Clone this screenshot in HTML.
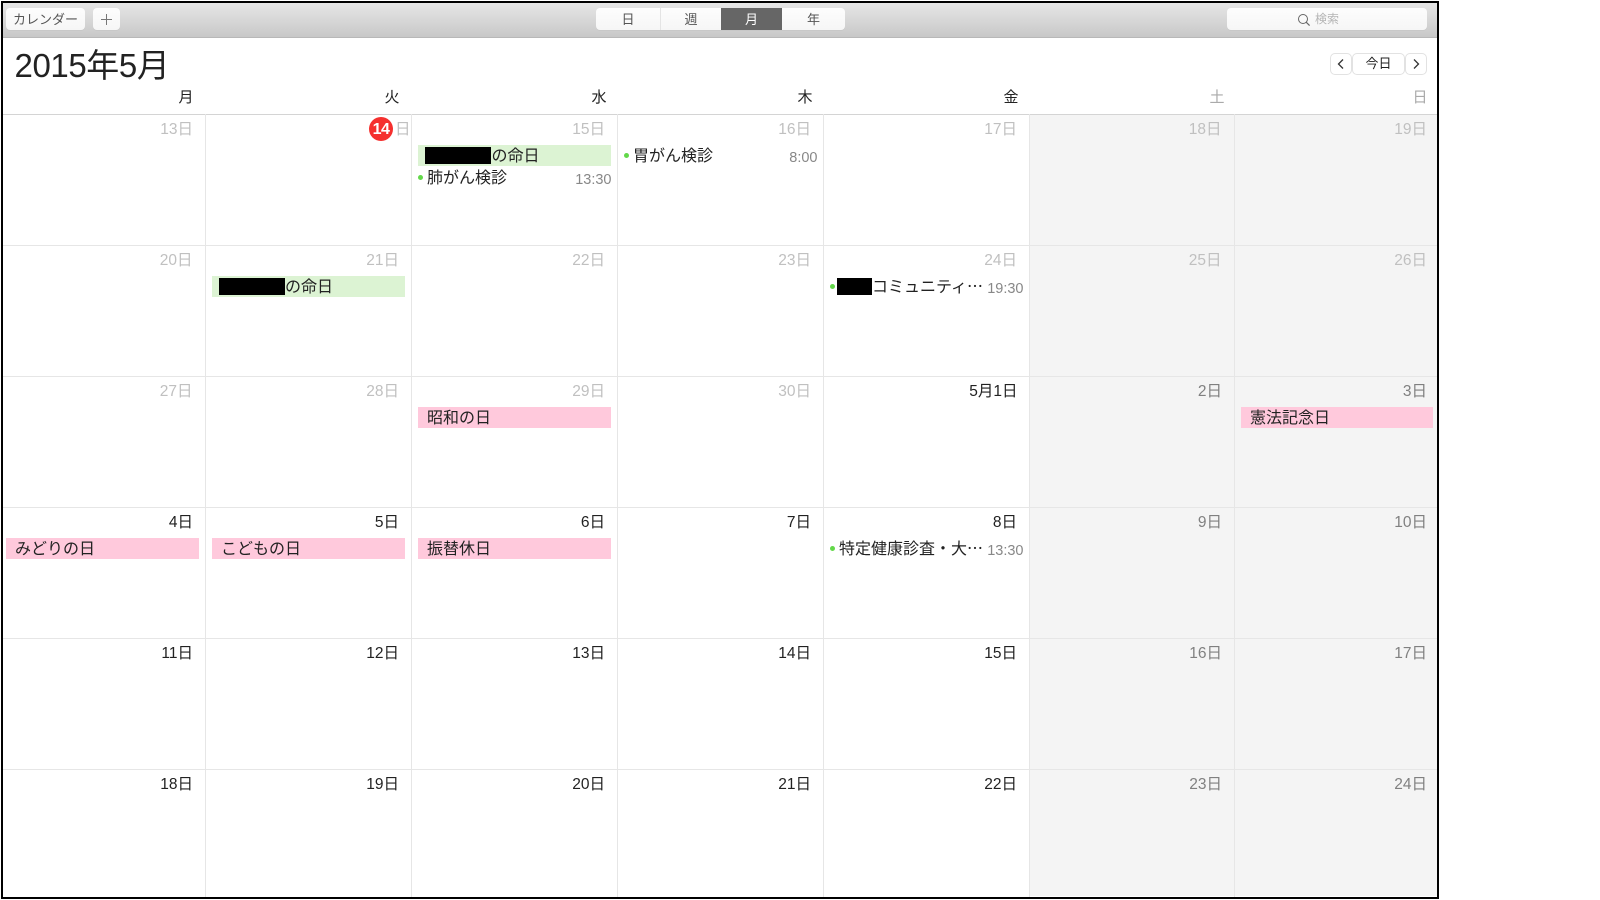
<!DOCTYPE html>
<html lang="ja"><head><meta charset="utf-8"><title>カレンダー</title>
<style>
html,body{margin:0;padding:0;background:#fff}
body{width:1600px;height:900px;position:relative;overflow:hidden;font-family:"Liberation Sans","Noto Sans CJK JP",sans-serif;color:#222}
div,span,svg{position:absolute}
.h{left:2px;width:1436px;height:1.5px;background:#e6e6e6}
.v{width:1px;top:114px;height:783px;background:#e6e6e6}
.btn{background:linear-gradient(#fdfdfd,#f6f6f6);border-radius:4px;top:8px;height:22px;box-shadow:0 1px 0 #c8c8c8;font-size:13px;line-height:23px;text-align:center;color:#555}
.wd{top:87.500px;font-size:15px;line-height:20px;width:30px;text-align:right;color:#222;margin-left:.5px}
.d{width:70px;text-align:right;font-size:15.500px;line-height:18px;white-space:nowrap;margin-top:.5px}
.p{color:#c0c0c0}.c{color:#222}.w{color:#808080}
.bar{height:21px;width:193px;font-size:16px;line-height:23.500px;color:#222;white-space:nowrap;text-indent:9px}
.g{background:#dcf3d3}.k{background:#ffc9dc}
.dot{width:5px;height:5px;border-radius:50%;background:#63d84a}
.t{font-size:16px;line-height:23.500px;white-space:nowrap;color:#222}
.tm{font-size:14.500px;line-height:20px;color:#888;text-align:right;width:60px}
.bl{background:#000}
.nav{top:53px;height:20px;background:#fff;border:1px solid #e2e2e2;border-radius:5px}
</style></head><body>
<div style="left:2px;top:3px;width:1435px;height:34px;background:linear-gradient(#e6e6e6,#c8c8c8);border-bottom:1px solid #b8b8b8"></div>
<div class="btn" style="left:6px;width:79px">カレンダー</div>
<div class="btn" style="left:93px;width:27px"></div>
<svg style="left:100px;top:12.500px" width="13" height="13" viewBox="0 0 13 13"><path d="M6.500 1V12M1 6.500H12" stroke="#777" stroke-width="1"/></svg>
<div class="btn" style="left:596px;width:249px"></div>
<div class="btn" style="left:596px;width:64px;background:none;box-shadow:none">日</div>
<div style="left:660px;top:8px;width:1px;height:22px;background:#e4e4e4"></div>
<div class="btn" style="left:661px;width:60px;background:none;box-shadow:none">週</div>
<div class="btn" style="left:721px;width:61px;background:#666;color:#fff;border-radius:0;box-shadow:none;height:22px">月</div>
<div class="btn" style="left:782px;width:63px;background:none;box-shadow:none">年</div>
<div class="btn" style="left:1227px;width:200px"></div>
<svg style="left:1297px;top:12.500px" width="14" height="14" viewBox="0 0 14 14"><circle cx="6" cy="6" r="4.500" fill="none" stroke="#666" stroke-width="1"/><path d="M9.300 9.300L12.600 12.600" stroke="#666" stroke-width="1.200"/></svg>
<div style="left:1315px;top:10px;font-size:12px;line-height:18px;color:#b5b5b5">検索</div>

<div style="left:14.500px;top:43.500px;font-size:33px;line-height:44px;color:#222;letter-spacing:-.4px;white-space:nowrap">2015年5月</div>
<div class="nav" style="left:1330px;width:20px"></div>
<svg style="left:1335px;top:58px" width="12" height="12" viewBox="0 0 12 12"><path d="M8 1.500L3.500 6L8 10.500" fill="none" stroke="#333" stroke-width="1.300"/></svg>
<div class="nav" style="left:1352px;width:51px;font-size:13px;line-height:20px;text-align:center;color:#222">今日</div>
<div class="nav" style="left:1405px;width:20px"></div>
<svg style="left:1410px;top:58px" width="12" height="12" viewBox="0 0 12 12"><path d="M4 1.500L8.500 6L4 10.500" fill="none" stroke="#333" stroke-width="1.300"/></svg>

<div class="wd" style="left:163px">月</div>
<div class="wd" style="left:369px">火</div>
<div class="wd" style="left:576px">水</div>
<div class="wd" style="left:782px">木</div>
<div class="wd" style="left:988px">金</div>
<div class="wd" style="left:1194px;color:#aaa">土</div>
<div class="wd" style="left:1397px;color:#aaa">日</div>

<div style="left:1030px;top:115px;width:407px;height:781px;background:#f4f4f4"></div>
<div class="h" style="top:113.500px;background:#d4d4d4"></div>
<div class="h" style="top:244.500px"></div>
<div class="h" style="top:375.500px"></div>
<div class="h" style="top:506.500px"></div>
<div class="h" style="top:637.500px"></div>
<div class="h" style="top:768.500px"></div>
<div class="v" style="left:205px"></div>
<div class="v" style="left:411px"></div>
<div class="v" style="left:617px"></div>
<div class="v" style="left:823px"></div>
<div class="v" style="left:1029px"></div>
<div class="v" style="left:1234px"></div>

<!-- row 1 -->
<div class="d p" style="left:123px;top:120px">13日</div>
<div style="left:369px;top:117px;width:24px;height:24px;border-radius:50%;background:#f5302e;color:#fff;font-size:16px;font-weight:bold;line-height:25px;text-align:center;letter-spacing:-.5px">14</div>
<div class="d p" style="left:340.500px;top:120px">日</div>
<div class="d p" style="left:535px;top:120px">15日</div>
<div class="d p" style="left:741px;top:120px">16日</div>
<div class="d p" style="left:947px;top:120px">17日</div>
<div class="d p" style="left:1151.500px;top:120px">18日</div>
<div class="d p" style="left:1357px;top:120px">19日</div>
<div class="bar g" style="left:418px;top:145px"></div>
<div class="bl" style="left:424.500px;top:147px;width:66px;height:17px"></div>
<div class="t" style="left:491.500px;top:144.500px">の命日</div>
<div class="dot" style="left:418px;top:175px"></div>
<div class="t" style="left:427px;top:167px">肺がん検診</div>
<div class="tm" style="left:551.500px;top:169.500px">13:30</div>
<div class="dot" style="left:624px;top:153px"></div>
<div class="t" style="left:633px;top:144.500px">胃がん検診</div>
<div class="tm" style="left:757.500px;top:147.500px">8:00</div>

<!-- row 2 -->
<div class="d p" style="left:122.500px;top:251px">20日</div>
<div class="d p" style="left:329px;top:251px">21日</div>
<div class="d p" style="left:535px;top:251px">22日</div>
<div class="d p" style="left:741px;top:251px">23日</div>
<div class="d p" style="left:947px;top:251px">24日</div>
<div class="d p" style="left:1151.500px;top:251px">25日</div>
<div class="d p" style="left:1357px;top:251px">26日</div>
<div class="bar g" style="left:212px;top:276px"></div>
<div class="bl" style="left:218.500px;top:278px;width:66px;height:17px"></div>
<div class="t" style="left:285px;top:275.500px">の命日</div>
<div class="dot" style="left:830px;top:284px"></div>
<div class="bl" style="left:837px;top:278px;width:35px;height:17px"></div>
<div class="t" style="left:872px;top:275.500px;width:112px;overflow:hidden">コミュニティ⋯</div>
<div class="tm" style="left:963.500px;top:278.500px">19:30</div>

<!-- row 3 -->
<div class="d p" style="left:122.500px;top:382px">27日</div>
<div class="d p" style="left:329px;top:382px">28日</div>
<div class="d p" style="left:535px;top:382px">29日</div>
<div class="d p" style="left:741px;top:382px">30日</div>
<div class="d c" style="left:947.500px;top:382px">5月1日</div>
<div class="d w" style="left:1152px;top:382px">2日</div>
<div class="d w" style="left:1357px;top:382px">3日</div>
<div class="bar k" style="left:418px;top:407px">昭和の日</div>
<div class="bar k" style="left:1241px;top:407px;width:192px">憲法記念日</div>

<!-- row 4 -->
<div class="d c" style="left:123px;top:513px">4日</div>
<div class="d c" style="left:329px;top:513px">5日</div>
<div class="d c" style="left:535px;top:513px">6日</div>
<div class="d c" style="left:741px;top:513px">7日</div>
<div class="d c" style="left:947px;top:513px">8日</div>
<div class="d w" style="left:1152px;top:513px">9日</div>
<div class="d w" style="left:1357px;top:513px">10日</div>
<div class="bar k" style="left:6px;top:538px">みどりの日</div>
<div class="bar k" style="left:212px;top:538px">こどもの日</div>
<div class="bar k" style="left:418px;top:538px">振替休日</div>
<div class="dot" style="left:830px;top:546px"></div>
<div class="t" style="left:839px;top:537.500px">特定健康診査・大⋯</div>
<div class="tm" style="left:963.500px;top:540.500px">13:30</div>

<!-- row 5 -->
<div class="d c" style="left:123px;top:644px">11日</div>
<div class="d c" style="left:329px;top:644px">12日</div>
<div class="d c" style="left:535px;top:644px">13日</div>
<div class="d c" style="left:741px;top:644px">14日</div>
<div class="d c" style="left:947px;top:644px">15日</div>
<div class="d w" style="left:1152px;top:644px">16日</div>
<div class="d w" style="left:1357px;top:644px">17日</div>

<!-- row 6 -->
<div class="d c" style="left:123px;top:775px">18日</div>
<div class="d c" style="left:329px;top:775px">19日</div>
<div class="d c" style="left:535px;top:775px">20日</div>
<div class="d c" style="left:741px;top:775px">21日</div>
<div class="d c" style="left:947px;top:775px">22日</div>
<div class="d w" style="left:1152px;top:775px">23日</div>
<div class="d w" style="left:1357px;top:775px">24日</div>

<div style="left:1px;top:1px;width:1437.500px;height:897.500px;box-sizing:border-box;border:solid #000;border-width:2.500px"></div>
</body></html>
